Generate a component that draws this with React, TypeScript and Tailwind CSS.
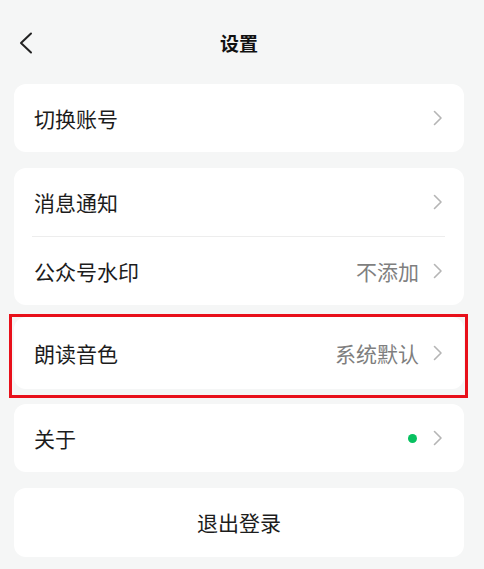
import React from 'react';

const Chevron = () => (
    <svg width="10" height="16" viewBox="0 0 10 16" fill="none" className="shrink-0">
        <path d="M1.5 1.5L8 8l-6.5 6.5" stroke="#b5b5b5" strokeWidth="1.6" strokeLinecap="round" strokeLinejoin="round" />
    </svg>
);

const Row = ({ label, value, dot, height = 'h-[68px]' }: { label: string; value?: string; dot?: boolean; height?: string }) => (
    <div className={`flex items-center pl-[20px] pr-[21px] ${height}`}>
        <span className="flex-1 text-[21px] leading-none text-[#1c1c1c]">{label}</span>
        {value && <span className="mr-[14px] text-[21px] leading-none text-[#7f7f7f]">{value}</span>}
        {dot && <span className="mr-[16px] h-[9px] w-[9px] rounded-full bg-[#07c160]" />}
        <Chevron />
    </div>
);

export default function App() {
    return (
        <div className="h-[569px] w-[484px] overflow-hidden bg-[#f5f6f6] font-['Noto_Sans_CJK_SC','Noto_Sans',sans-serif]">
            {/* 顶部导航 */}
            <div className="grid h-[84px] grid-cols-[1fr_auto_1fr] items-center pr-[6px]">
                <div className="pl-[19px] pt-[1px]">
                    <svg width="14" height="22" viewBox="0 0 14 22" fill="none">
                        <path d="M12 1.5L2 11l10 9.5" stroke="#222" strokeWidth="2" strokeLinecap="round" strokeLinejoin="round" />
                    </svg>
                </div>
                <h1 className="text-[19px] font-bold leading-none text-[#111]">设置</h1>
                <div />
            </div>

            <div className="ml-[14px] mr-[20px] flex flex-col">
                <div className="rounded-[12px] bg-white">
                    <Row label="切换账号" />
                </div>

                <div className="mt-[16px] rounded-[12px] bg-white">
                    <Row label="消息通知" />
                    <div className="ml-[18px] mr-[19px] h-px bg-[#ededed]" />
                    <Row label="公众号水印" value="不添加" />
                </div>

                <div className="relative mt-[12px] rounded-[12px] bg-white">
                    <Row label="朗读音色" value="系统默认" height="h-[72px]" />
                    {/* 标注框 */}
                    <div className="pointer-events-none absolute -top-[3px] -bottom-[9px] -left-[5px] -right-[4px] border-[3px] border-[#e8101a]" />
                </div>

                <div className="mt-[15px] rounded-[12px] bg-white">
                    <Row label="关于" dot />
                </div>

                <div className="mt-[16px] flex h-[69px] items-center justify-center rounded-[12px] bg-white">
                    <span className="text-[21px] leading-none text-[#1c1c1c]">退出登录</span>
                </div>
            </div>
        </div>
    );
}
